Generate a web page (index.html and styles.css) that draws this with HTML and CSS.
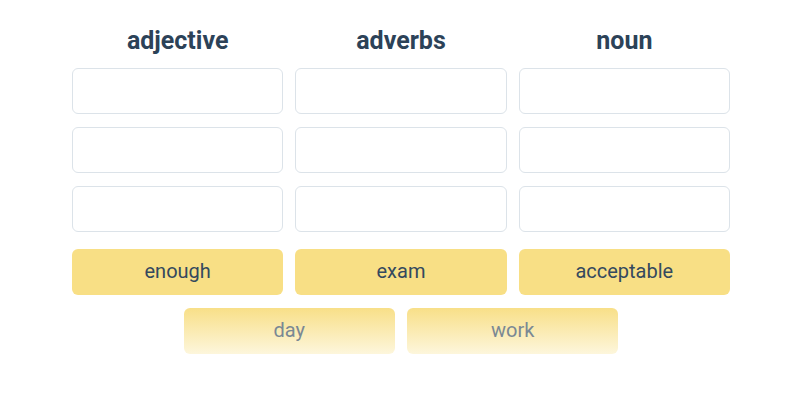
FILE: index.html
```html
<!DOCTYPE html>
<html lang="en">
<head>
    <meta charset="UTF-8">
    <title>Sort the words</title>
    <link rel="stylesheet" href="styles.css">
</head>
<body>

<div class="board">
    <div class="columns">
        <div class="column">
            <h2 class="column-title">adjective</h2>
            <div class="slot"></div>
            <div class="slot"></div>
            <div class="slot"></div>
        </div>
        <div class="column">
            <h2 class="column-title">adverbs</h2>
            <div class="slot"></div>
            <div class="slot"></div>
            <div class="slot"></div>
        </div>
        <div class="column">
            <h2 class="column-title">noun</h2>
            <div class="slot"></div>
            <div class="slot"></div>
            <div class="slot"></div>
        </div>
    </div>

    <div class="words">
        <div class="word">enough</div>
        <div class="word">exam</div>
        <div class="word">acceptable</div>
    </div>
    <div class="words faded">
        <div class="word">day</div>
        <div class="word">work</div>
    </div>
</div>

</body>
</html>
```

FILE: styles.css
```css
body {
    margin: 0;
    padding: 0;
    background-color: #ffffff;
    font-family: Roboto, "Noto Sans", Arial, sans-serif;
    color: #2e4359;
}
.board {
    width: 658px;
    margin: 0 0 0 72px;
    padding-top: 20px;
}
.columns {
    display: grid;
    grid-template-columns: repeat(3, 1fr);
    gap: 12px;
}
.column {
    display: flex;
    flex-direction: column;
    gap: 13px;
}
.column-title {
    margin: 0 0 2px 0;
    height: 33px;
    line-height: 41px;
    text-align: center;
    font-size: 25px;
    font-weight: 700;
    color: #2c4258;
}
.slot {
    height: 46px;
    border: 1px solid #dce3e9;
    border-radius: 6px;
    box-sizing: border-box;
}
.words {
    display: flex;
    justify-content: center;
    gap: 12px;
    margin-top: 17px;
}
.words + .words {
    margin-top: 13px;
}
.word {
    flex: 0 0 calc((100% - 24px) / 3);
    height: 46px;
    line-height: 45px;
    border-radius: 6px;
    background-color: #f8df85;
    text-align: center;
    font-size: 20px;
    color: #34495e;
}
.faded .word {
    background: linear-gradient(to bottom, #f8df88, #fdf6dc);
    color: #7a8894;
}
```
